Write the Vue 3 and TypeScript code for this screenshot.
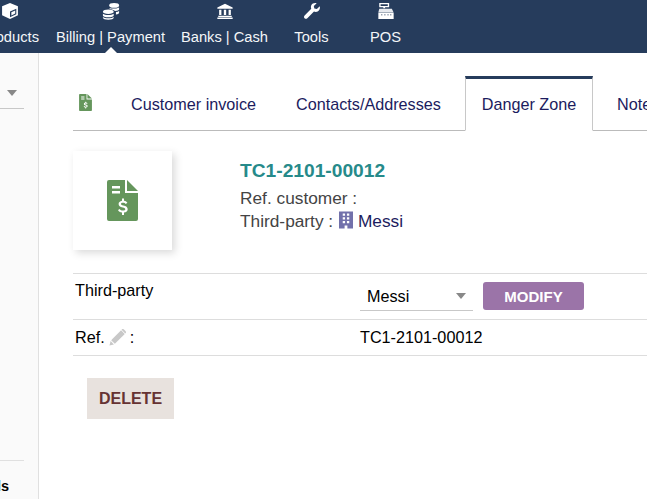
<script setup lang="ts">
const navItems = [
  { label: 'Products', icon: 'box', width: 76 },
  { label: 'Billing | Payment', icon: 'coins', width: 125, active: true },
  { label: 'Banks | Cash', icon: 'bank', width: 103 },
  { label: 'Tools', icon: 'wrench', width: 71 },
  { label: 'POS', icon: 'pos', width: 77 },
]
</script>

<template>
  <div class="page">
    <header class="topbar">
      <a
        v-for="item in navItems"
        :key="item.label"
        class="nav-item"
        :class="{ 'nav-item--active': item.active }"
        :style="{ width: item.width + 'px' }"
      >
        <svg class="nav-icon" viewBox="0 0 20 20" fill="#fff">
          <template v-if="item.icon === 'box'">
            <path d="M10 1 18.800 4.600V14.800L10 19 1.200 14.800V4.600Z" />
            <path d="M10 10.600 17 7.400V13.600L10 17Z" fill="#263c5c" />
            <path d="M11.500 11.500 15.800 9.500V12.800L11.500 14.900Z" fill="#fff" />
          </template>
          <template v-else-if="item.icon === 'coins'">
            <ellipse cx="13.500" cy="3.800" rx="5.500" ry="2.600" />
            <path d="M8.500 6.600C10 7.600 15.500 7.800 19 6V8C19 9 17 9.800 14.500 9.900 13 8.600 10.500 8 8.500 8Z" />
            <path d="M15.500 11.200C17 11 18.200 10.600 19 10V12C19 13 17.500 13.700 15.500 13.900Z" />
            <ellipse cx="7" cy="10.800" rx="6" ry="2.600" />
            <path d="M1 13C3 15 11 15 13 13V15C13 16.200 10.400 17 7 17S1 16.200 1 15Z" />
            <path d="M1 16.600C3 18.400 11 18.400 13 16.600V17.600C13 18.900 10.400 19.800 7 19.800S1 18.900 1 17.600Z" />
          </template>
          <template v-else-if="item.icon === 'bank'">
            <path d="M10 2 18.500 6V7.500H1.500V6Z" />
            <path d="M3.500 8.500H6V14.500H3.500ZM8.700 8.500H11.300V14.500H8.700ZM14 8.500H16.500V14.500H14Z" />
            <path d="M2.500 15.200H17.500V16.600H2.500ZM1.500 17.200H18.500V18.800H1.500Z" />
          </template>
          <template v-else-if="item.icon === 'wrench'">
            <path d="M18.600 4.700 15.400 7.700 12.600 7.100 12 4.400 15.200 1.300C12.800.6 10.200 1.500 9.200 3.700 8.600 5 8.700 6.400 9.200 7.600L1.800 15C.9 15.900.9 17.200 1.700 18 2.600 18.900 3.900 18.900 4.800 18L12.200 10.600C13.500 11.200 15 11.200 16.300 10.600 18.400 9.500 19.300 7 18.600 4.700Z" />
          </template>
          <template v-else>
            <path d="M2.500 1H13.500V5.800H9V7H7V5.800H2.500ZM4 2.400V4.400H12V2.400Z" fill-rule="evenodd" />
            <path d="M2.500 7.500H16.500L18.500 11.800H1.500Z" fill="#e6e9ee" />
            <path d="M1.500 12H18.500V19H1.500ZM4.500 13.800V14.800H6V13.800ZM8 13.800V14.800H9.500V13.800ZM11.500 13.800V14.800H13V13.800ZM14.500 13.800V14.800H16V13.800Z" fill-rule="evenodd" />
          </template>
        </svg>
        <span class="nav-label">{{ item.label }}</span>
      </a>
    </header>

    <div class="body">
      <aside class="sidebar">
        <div class="side-select"><span class="caret caret--side"></span></div>
        <div class="side-rule"></div>
        <div class="side-text">Tools</div>
      </aside>

      <main class="content">
        <nav class="tabs">
          <span class="tab tab--icon">
            <svg class="doc-small" viewBox="0 0 31 41">
              <path d="M2 0H18V13H31V39A2 2 0 0 1 29 41H2A2 2 0 0 1 0 39V2A2 2 0 0 1 2 0Z" fill="#65965c" />
              <path d="M20 0 31 11H20Z" fill="#65965c" />
              <path d="M5 6H13V8.500H5ZM5 11H13V13.500H5Z" fill="#fff" />
              <path d="M15 18.500H17V20.700C18.800 21 19.900 21.800 20.400 22.800L18.700 23.900C18.200 23.100 17.300 22.700 16 22.700 14.600 22.700 14 23.200 14 23.900 14 24.600 14.600 25 16.300 25.400 19.200 26.100 20.700 27.100 20.700 29.200 20.700 31 19.300 32.200 17 32.500V35H15V32.500C13 32.200 11.600 31.200 11 29.900L12.800 28.900C13.300 29.900 14.400 30.500 15.900 30.500 17.500 30.500 18.300 30 18.300 29.200 18.300 28.400 17.600 28 15.700 27.500 13 26.800 11.600 25.900 11.600 24 11.600 22.300 12.900 21.100 15 20.700Z" fill="#fff" />
            </svg>
          </span>
          <a class="tab tab--invoice">Customer invoice</a>
          <a class="tab tab--contacts">Contacts/Addresses</a>
          <a class="tab tab--active">Danger Zone</a>
          <a class="tab tab--notes">Notes</a>
        </nav>

        <section class="banner">
          <div class="photo">
            <svg class="doc" viewBox="0 0 31 41">
              <path d="M2 0H18V13H31V39A2 2 0 0 1 29 41H2A2 2 0 0 1 0 39V2A2 2 0 0 1 2 0Z" fill="#65965c" />
              <path d="M20 0 31 11H20Z" fill="#65965c" />
              <path d="M5 6H13V8.500H5ZM5 11H13V13.500H5Z" fill="#fff" />
              <path d="M15 18.500H17V20.700C18.800 21 19.900 21.800 20.400 22.800L18.700 23.900C18.200 23.100 17.300 22.700 16 22.700 14.600 22.700 14 23.200 14 23.900 14 24.600 14.600 25 16.300 25.400 19.200 26.100 20.700 27.100 20.700 29.200 20.700 31 19.300 32.200 17 32.500V35H15V32.500C13 32.200 11.600 31.200 11 29.900L12.800 28.900C13.300 29.900 14.400 30.500 15.900 30.500 17.500 30.500 18.300 30 18.300 29.200 18.300 28.400 17.600 28 15.700 27.500 13 26.800 11.600 25.900 11.600 24 11.600 22.300 12.900 21.100 15 20.700Z" fill="#fff" />
            </svg>
          </div>
          <div class="ref">
            <div class="ref-title">TC1-2101-00012</div>
            <div class="ref-line">Ref. customer :</div>
            <div class="ref-line">
              Third-party :
              <svg class="building" viewBox="0 0 15 18">
                <path fill-rule="evenodd" d="M0 0H15V18H9V15H6V18H0ZM4 2V4.500H6.500V2ZM8.500 2V4.500H11V2ZM4 6V8.500H6.500V6ZM8.500 6V8.500H11V6ZM4 10V12.500H6.500V10ZM8.500 10V12.500H11V10Z" fill="#7271ab" />
              </svg>
              <a class="ref-link">Messi</a>
            </div>
          </div>
        </section>

        <div class="table">
          <div class="row row--party">
            <div class="cell-label">Third-party</div>
            <div class="cell-value cell-value--party">
              <div class="select">Messi<span class="caret"></span></div>
              <button class="btn-modify" type="button">MODIFY</button>
            </div>
          </div>
          <div class="row row--ref">
            <div class="cell-label">
              Ref.
              <svg class="pencil" viewBox="0 0 18 18">
                <path d="M12.800 1.300 16.700 5.200 6.200 15.700 2.300 11.800Z" fill="#c8c8c8" />
                <path d="M1.700 12.800 5.200 16.300 0.500 17.500Z" fill="#c8c8c8" />
                <path d="M13.800.3C14.300-.1 15-.1 15.500.3L17.700 2.500C18.100 3 18.100 3.700 17.700 4.200L17.200 4.700 13.300.8Z" fill="#c8c8c8" />
              </svg>
              :
            </div>
            <div class="cell-value">TC1-2101-00012</div>
          </div>
        </div>

        <div class="actions">
          <button class="btn-delete" type="button">DELETE</button>
        </div>
      </main>
    </div>
  </div>
</template>

<style scoped>
.page {
  width: 647px;
  height: 499px;
  overflow: hidden;
  display: flex;
  flex-direction: column;
  background: #fff;
  font-family: "Liberation Sans", Arial, sans-serif;
  font-size: 16.2px;
  color: #000;
}

.topbar {
  height: 53px;
  flex: none;
  display: flex;
  margin-left: -28px;
  background: #263c5c;
}

.nav-item {
  flex: none;
  position: relative;
  display: flex;
  flex-direction: column;
  align-items: center;
  color: #f4f6f8;
}

.nav-item--active::after {
  content: "";
  position: absolute;
  left: 50%;
  bottom: 0;
  margin-left: -6px;
  border: 6px solid transparent;
  border-top: 0;
  border-bottom-color: #fff;
}

.nav-icon {
  width: 18px;
  height: 18px;
  margin-top: 2px;
}

.nav-label {
  margin-top: 9px;
  font-size: 14.7px;
  white-space: nowrap;
}

.body {
  flex: 1;
  display: flex;
  min-height: 0;
}

.sidebar {
  width: 38px;
  flex: none;
  display: flex;
  flex-direction: column;
  background: #fafafa;
  border-right: 1px solid #e0e0e0;
  overflow: hidden;
}

.side-select {
  height: 55px;
  width: 24px;
  display: flex;
  align-items: flex-end;
  justify-content: flex-end;
  border-bottom: 1px solid #c8c8c8;
}

.caret {
  display: block;
  border: 5px solid transparent;
  border-bottom: 0;
  border-top: 6px solid #888;
}

.caret--side {
  margin-bottom: 12px;
  margin-right: 7px;
}

.side-rule {
  width: 24px;
  margin-top: 351px;
  border-top: 1px solid #e0e0e0;
}

.side-text {
  width: 9px;
  margin-top: 17px;
  font-size: 14.5px;
  font-weight: 700;
  white-space: nowrap;
  direction: rtl;
  overflow: hidden;
}

.content {
  flex: 1;
  min-width: 0;
  padding: 23px 0 0 34px;
}

.tabs {
  width: 640px;
  height: 54px;
  display: flex;
  align-items: stretch;
  border-bottom: 1px solid #bbb;
  color: #1c1c5e;
}

.tab {
  flex: none;
  display: flex;
  align-items: center;
  white-space: nowrap;
  padding-top: 3px;
}

.tab--icon {
  width: 58px;
  padding-left: 6px;
  box-sizing: border-box;
  padding-bottom: 5px;
}

.doc-small {
  width: 13px;
  height: 17px;
}

.tab--invoice {
  width: 165px;
}

.tab--contacts {
  width: 169px;
}

.tab--active {
  box-sizing: border-box;
  width: 128px;
  height: 55px;
  justify-content: center;
  padding-top: 0;
  background: #fff;
  border: 1px solid #c8c8c8;
  border-top: 3px solid #263c5c;
  border-bottom: 1px solid #fff;
}

.tab--notes {
  margin-left: 24px;
}

.banner {
  display: flex;
  padding-top: 20px;
  height: 142px;
  box-sizing: border-box;
}

.photo {
  width: 99px;
  height: 99px;
  flex: none;
  display: flex;
  align-items: center;
  justify-content: center;
  background: #fff;
  box-shadow: 3px 3px 8px rgba(0, 0, 0, 0.15);
}

.doc {
  width: 31px;
  height: 41px;
}

.ref {
  margin-left: 68px;
  padding-top: 9px;
  color: #444;
  font-size: 17.3px;
}

.ref-title {
  font-size: 19.2px;
  font-weight: 700;
  color: #268a8a;
  line-height: 22px;
  margin-bottom: 5px;
}

.ref-line {
  line-height: 23px;
}

.building {
  width: 14px;
  height: 18px;
  vertical-align: -2px;
  margin: 0 5px 0 1px;
}

.ref-link {
  color: #1c1c5e;
}

.table {
  width: 640px;
  border-top: 1px solid #ddd;
}

.row {
  display: flex;
  border-bottom: 1px solid #ddd;
}

.row--party {
  height: 45px;
}

.row--ref {
  height: 35px;
  align-items: center;
}

.cell-label {
  width: 287px;
  padding-left: 2px;
  box-sizing: border-box;
  flex: none;
}

.row--party .cell-label {
  padding-top: 7px;
}

.cell-value--party {
  display: flex;
  align-items: flex-start;
  padding-top: 8px;
}

.select {
  width: 113px;
  height: 29px;
  box-sizing: border-box;
  display: flex;
  align-items: center;
  justify-content: space-between;
  padding: 0 7px;
  border-bottom: 1px solid #c8c8c8;
}

.btn-modify {
  margin-left: 10px;
  width: 101px;
  height: 28px;
  border: 0;
  padding: 0;
  border-radius: 3px;
  background: #9b74a8;
  color: #fff;
  font: 700 15px "Liberation Sans", Arial, sans-serif;
}

.pencil {
  width: 17px;
  height: 17px;
  vertical-align: -3px;
  margin-right: -1px;
}

.actions {
  padding: 22px 0 0 14px;
}

.btn-delete {
  width: 87px;
  height: 41px;
  border: 0;
  padding: 0;
  background: #e8e2de;
  color: #633;
  font: 700 16px "Liberation Sans", Arial, sans-serif;
}
</style>

<style>
html,
body {
  margin: 0;
  overflow: hidden;
}
</style>
